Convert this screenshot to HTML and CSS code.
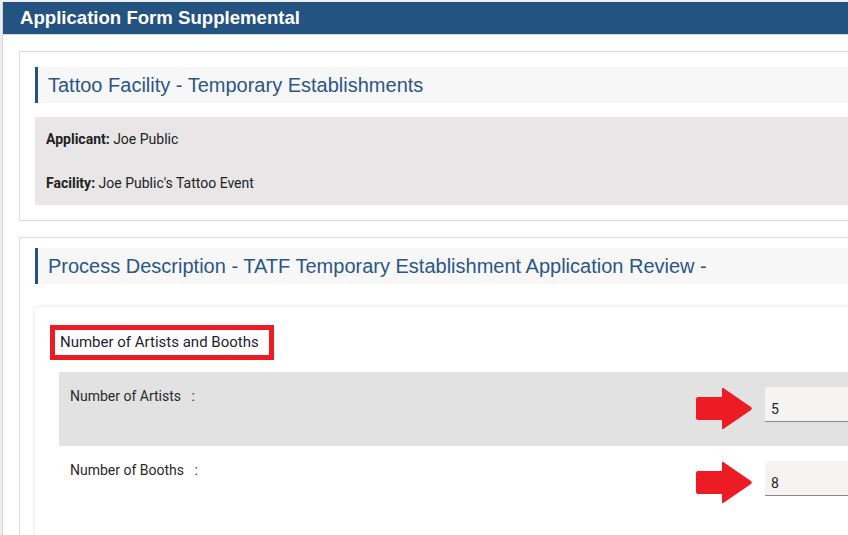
FILE: index.html
```html
<!DOCTYPE html>
<html lang="en">
<head>
  <meta charset="UTF-8">
  <meta name="viewport" content="width=device-width, initial-scale=1.0">
  <title>Application Form Supplemental</title>
  <link rel="stylesheet" href="styles.css">
</head>
<body>
  <div class="page">
    <div class="page-header">
      <h1>Application Form Supplemental</h1>
    </div>

    <div class="page-body">
      <div class="card">
        <h2 class="section-title">Tattoo Facility - Temporary Establishments</h2>
        <div class="info-box">
          <p><strong>Applicant:</strong> Joe Public</p>
          <p><strong>Facility:</strong> Joe Public's Tattoo Event</p>
        </div>
      </div>

      <div class="card card-process">
        <h2 class="section-title">Process Description - TATF Temporary Establishment Application Review -</h2>

        <div class="form-panel">
          <h3 class="group-title">Number of Artists and Booths</h3>

          <div class="field-list">
            <div class="field-row shaded">
              <label class="field-label">Number of Artists &nbsp;&nbsp;:</label>
              <svg class="pointer" viewBox="0 0 56 43" width="56" height="43">
                <path d="M2 10 H26 V2 Q26 0 28 1.5 L55 20 Q56.5 21.5 55 23 L28 41.5 Q26 43 26 41 V33 H2 Q0 33 0 31 V12 Q0 10 2 10 Z" fill="#ed1c24"/>
              </svg>
              <div class="field-input">5</div>
            </div>
            <div class="field-row">
              <label class="field-label">Number of Booths &nbsp;&nbsp;:</label>
              <svg class="pointer" viewBox="0 0 56 43" width="56" height="43">
                <path d="M2 10 H26 V2 Q26 0 28 1.5 L55 20 Q56.5 21.5 55 23 L28 41.5 Q26 43 26 41 V33 H2 Q0 33 0 31 V12 Q0 10 2 10 Z" fill="#ed1c24"/>
              </svg>
              <div class="field-input">8</div>
            </div>
          </div>
        </div>
      </div>
    </div>
  </div>
</body>
</html>
```

FILE: styles.css
```css
* {
  margin: 0;
  padding: 0;
  box-sizing: border-box;
}

body {
  font-family: Roboto, 'Liberation Sans', Arial, sans-serif;
  background: #eeeeee;
  color: #222222;
  overflow: hidden;
}

.page {
  width: 1100px;
  min-height: 100vh;
  margin: 2px 0 0 2px;
  background: #ffffff;
  border-left: 1px solid #d6d6d6;
}

.page-header {
  height: 33px;
  background: #245281;
  border-bottom: 1px solid #d8d8d8;
  padding-left: 17px;
}

.page-header h1 {
  font-family: 'Liberation Sans', Arial, sans-serif;
  font-size: 18.6px;
  font-weight: 700;
  line-height: 32px;
  color: #ffffff;
}

.page-body {
  padding: 16px;
}

.card {
  border: 1px solid #dcdcdc;
  padding: 15px 15px 15px;
  margin-bottom: 16px;
}

.card-process {
  padding-top: 10px;
}

.section-title {
  font-family: 'Liberation Sans', Arial, sans-serif;
  font-size: 20px;
  font-weight: 400;
  line-height: 36px;
  height: 36px;
  color: #2b5686;
  background: #f7f7f7;
  border-left: 3px solid #245281;
  padding-left: 10px;
}

.info-box {
  margin-top: 14px;
  background: #e8e6e7;
  padding: 13px 11px;
  font-size: 14px;
  line-height: 18px;
}

.info-box p + p {
  margin-top: 26px;
}

.info-box strong {
  font-weight: 700;
}

.form-panel {
  margin-top: 23px;
  background: #ffffff;
  border-radius: 4px;
  box-shadow: 0 0 4px rgba(0, 0, 0, 0.13);
  padding: 18px 15px 30px;
}

.group-title {
  display: inline-block;
  font-size: 15px;
  font-weight: 400;
  line-height: 17px;
  color: #1f2333;
  border: 5px solid #ed1c24;
  padding: 4px 10px 4px 5px;
}

.field-list {
  margin: 12px 0 0 9px;
}

.field-row {
  display: flex;
  align-items: flex-start;
  padding: 15px 0 16px 11px;
}

.field-row.shaded {
  background: #e2e2e2;
}

.field-label {
  flex: 0 0 626px;
  font-size: 14px;
  line-height: 18px;
  color: #2a2a2a;
  white-space: pre;
}

.pointer {
  flex: none;
  display: block;
  margin-right: 13px;
}

.field-input {
  flex: 1;
  height: 35px;
  background: #f5f4f3;
  border-bottom: 1px solid #8a8a8a;
  border-radius: 3px 3px 0 0;
  padding: 14px 6px 0;
  font-size: 14px;
  line-height: 17px;
  color: #222222;
}
```
